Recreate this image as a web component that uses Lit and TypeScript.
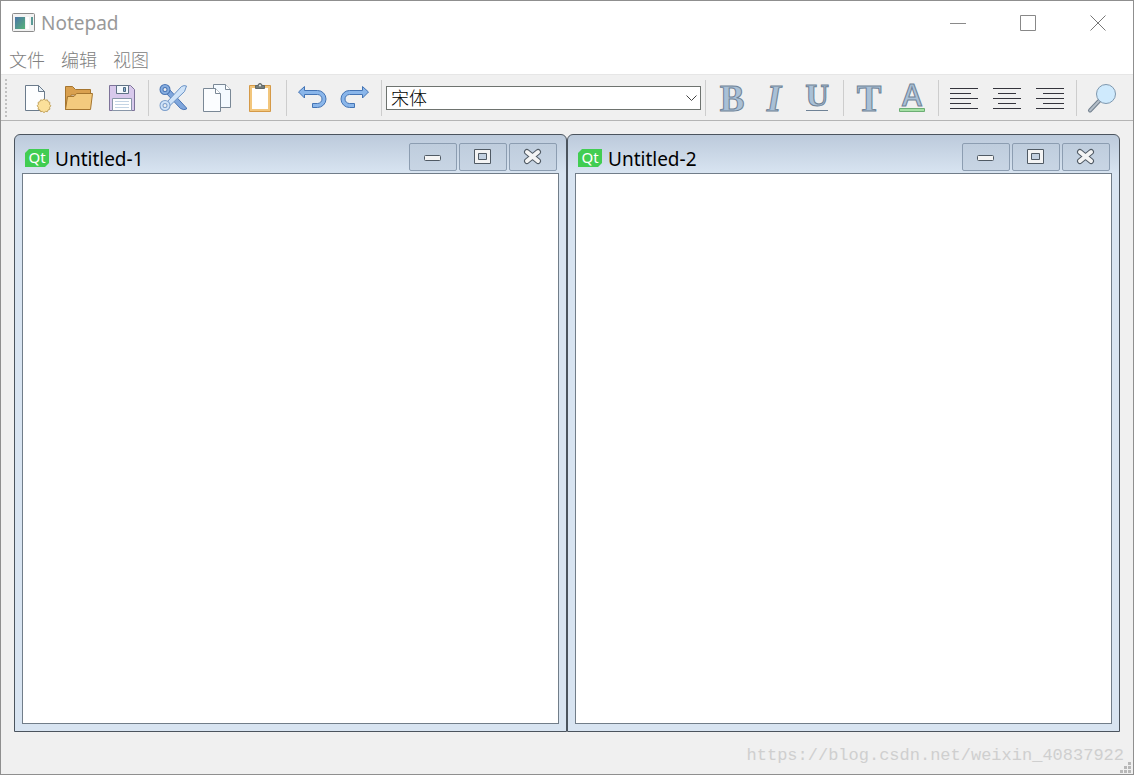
import { LitElement, html, css, svg, SVGTemplateResult } from "lit";
import { customElement, property } from "lit/decorators.js";

const icons: Record<string, SVGTemplateResult> = {
  new: svg`<path d="M5.500 4.500H18.500L24.500 10.500V29.500H5.500Z" fill="#fdfeff" stroke="#6b7b8c"/>
    <path d="M18.500 4.500V10.500H24.500Z" fill="#e8f1f8" stroke="#6b7b8c"/>
    <path d="M24 19l1.500 1.200 1.900-.3.700 1.800 1.800.7-.3 1.900 1.200 1.500-1.200 1.500.3 1.900-1.800.7-.7 1.800-1.900-.3-1.500 1.200-1.500-1.200-1.900.3-.7-1.800-1.800-.7.3-1.900-1.200-1.500 1.200-1.500-.3-1.900 1.800-.7.7-1.800 1.900.3z" transform="translate(0 -1)" fill="#fbe09a" stroke="#c2a25c"/>`,
  open: svg`<path d="M2.500 28.500V5.500H9.500L12.500 8.500H27.500V14H8L5 28.500Z" fill="#d9a04f" stroke="#a5752f"/>
    <path d="M2.500 28.500L4.500 15.500H11L13.500 12.500H29.500L27.500 28.500Z" fill="#f3ca7e" stroke="#a5752f"/>`,
  save: svg`<path d="M3.500 4.500H24.500L28.500 8.500V29.500H3.500Z" fill="#d8c9ec" stroke="#7d7399"/>
    <path d="M10.500 4.500H22.500V12.500H10.500Z" fill="#f4f9fd" stroke="#5f7285"/>
    <path d="M17.500 6.500H19.500V10.500H17.500Z" fill="#8bb2d6" stroke="#4e6880"/>
    <path d="M6.500 17.500H25.500V29.500H6.500Z" fill="#fff" stroke="#8896a8"/>
    <path d="M9 20.500H23M9 23.500H23M9 26.500H23" stroke="#c4d4e4"/>`,
  cut: svg`<path d="M8 12L22.500 27.500Q26 29.500 28.500 28L28.500 27L11.500 8.500Z" fill="#7fa6dc" stroke="#4a75b4"/>
    <path d="M8.500 21.500L23.500 5.500Q26 4 28.500 5L26.500 10.500L12 24.500Z" fill="#cfe3f8" stroke="#6b93c6"/>
    <circle cx="7" cy="8.500" r="3.500" fill="none" stroke="#4a75b4" stroke-width="4"/>
    <circle cx="7" cy="8.500" r="3.500" fill="none" stroke="#86addf" stroke-width="2"/>
    <circle cx="7" cy="24.500" r="3.500" fill="none" stroke="#7b9ecb" stroke-width="4"/>
    <circle cx="7" cy="24.500" r="3.500" fill="none" stroke="#cfe3f8" stroke-width="2"/>`,
  copy: svg`<path d="M12.500 3.500H24.500L29.500 8.500V26.500H12.500Z" fill="#f4faff" stroke="#7a8896"/>
    <path d="M24.500 3.500V8.500H29.500" fill="#fff" stroke="#7a8896"/>
    <path d="M2.500 7.500H14.500L19.500 12.500V30.500H2.500Z" fill="#fbfdff" stroke="#7a8896"/>
    <path d="M14.500 7.500V12.500H19.500" fill="#fff" stroke="#7a8896"/>`,
  paste: svg`<path d="M5.500 4.500H26.500V30.500H5.500Z" fill="#f2c67c" stroke="#d59a48"/>
    <path d="M8 7H24V28H8Z" fill="#fff"/>
    <path d="M11.500 7.500V4.500H14Q14 2.500 16 2.500T18 4.500H20.500V7.500Z" fill="#737c7c" stroke="#5f6868"/>
    <circle cx="16" cy="4.500" r="1" fill="#e8eded"/>`,
  undo: svg`<path d="M2.500 11L8.500 5.500V9.500H21.500A8.500 8.500 0 0 1 21.500 26.500H16.500V22.500H21.500A4.500 4.500 0 0 0 21.500 13.500H8.500V17Z" fill="#8ab6ea" stroke="#4474b4"/>`,
  redo: svg`<path d="M29.500 11L23.500 5.500V9.500H10.500A8.500 8.500 0 0 0 10.500 26.500H15.500V22.500H10.500A4.500 4.500 0 0 1 10.500 13.500H23.500V17Z" fill="#8ab6ea" stroke="#4474b4"/>`,
  bold: svg`<text class="serif" x="17" y="30" font-size="37">B</text>`,
  italic: svg`<text class="serif italic" x="16" y="30" font-size="37">I</text>`,
  underline: svg`<text class="slab" x="16" y="25" font-size="27">U</text><path d="M5 29.500H27" stroke="#6f8296"/>`,
  font: svg`<text class="serif" x="16" y="30" font-size="37">T</text>`,
  color: svg`<text class="sans" x="16" y="25" font-size="30">A</text><path d="M3.500 27.500H28.500V30.500H3.500Z" fill="#a4e0a4" stroke="#6cae74"/>`,
  left: svg`<path d="M2 7.500H30M2 12.500H23M2 17.500H30M2 22.500H23M2 27.500H30" stroke="#34343c"/>`,
  center: svg`<path d="M2 7.500H30M7 12.500H25M2 17.500H30M7 22.500H25M2 27.500H30" stroke="#34343c"/>`,
  right: svg`<path d="M2 7.500H30M9 12.500H30M2 17.500H30M9 22.500H30M2 27.500H30" stroke="#34343c"/>`,
  search: svg`<path d="M4 29.500L13 20" stroke="#717f8d" stroke-width="4" stroke-linecap="round"/>
    <path d="M4 29.500L13 20" stroke="#b4bec8" stroke-width="2" stroke-linecap="round"/>
    <circle cx="20" cy="13" r="9.500" fill="#cfeafd" stroke="#7e97ae"/>`,
};

interface Tool {
  icon: string;
  label: string;
}

const fileTools: Tool[][] = [
  [
    { icon: "new", label: "新建" },
    { icon: "open", label: "打开" },
    { icon: "save", label: "保存" },
  ],
  [
    { icon: "cut", label: "剪切" },
    { icon: "copy", label: "复制" },
    { icon: "paste", label: "粘贴" },
  ],
  [
    { icon: "undo", label: "撤销" },
    { icon: "redo", label: "重做" },
  ],
];

const formatTools: Tool[][] = [
  [
    { icon: "bold", label: "粗体" },
    { icon: "italic", label: "斜体" },
    { icon: "underline", label: "下划线" },
  ],
  [
    { icon: "font", label: "字体" },
    { icon: "color", label: "颜色" },
  ],
  [
    { icon: "left", label: "左对齐" },
    { icon: "center", label: "居中" },
    { icon: "right", label: "右对齐" },
  ],
  [{ icon: "search", label: "查找" }],
];

@customElement("tool-button")
class ToolButton extends LitElement {
  @property() icon = "";
  @property() label = "";

  static styles = css`
    :host {
      display: block;
      flex: none;
    }
    .button {
      display: flex;
      justify-content: center;
      align-items: center;
      width: 43px;
      height: 42px;
      padding: 0;
      border: 0;
      background: none;
    }
    .button:hover {
      background: #dcebf8;
    }
    .glyph {
      overflow: visible;
    }
    text {
      text-anchor: middle;
      fill: #a9c0d6;
      stroke: #6f8296;
      stroke-width: 1px;
      font-weight: 700;
    }
    .serif {
      font-family: "Liberation Serif", serif;
    }
    .italic {
      font-style: italic;
    }
    .slab {
      font-family: "DejaVu Serif", serif;
    }
    .sans {
      font-family: "Open Sans", sans-serif;
      font-weight: 600;
    }
  `;

  render() {
    return html`<button class="button" aria-label=${this.label}>
      <svg class="glyph" width="33" height="34" viewBox="0 0 33 34" fill="none">${icons[this.icon]}</svg>
    </button>`;
  }
}

@customElement("sub-window")
class SubWindow extends LitElement {
  @property() name = "";

  static styles = css`
    :host {
      display: flex;
      flex-direction: column;
      min-width: 0;
      box-sizing: border-box;
      padding: 0 7px 7px;
      border: 1px solid #4b545e;
      border-radius: 6px 6px 0 0;
      background: linear-gradient(#bccadb, #d8e4f1 38px, #d8e4f1);
    }
    .title {
      display: flex;
      align-items: center;
      gap: 2px;
      height: 38px;
      padding: 5px 2px 0 3px;
      box-sizing: border-box;
    }
    .logo {
      flex: none;
      margin: 3px 4px 0 0;
      overflow: visible;
    }
    .logo text {
      font: 400 15px "Noto Sans", sans-serif;
      fill: #fff;
      text-anchor: middle;
    }
    .name {
      flex: 1;
      margin: 4px 0 0;
      font: 400 19px/24px "Noto Sans", sans-serif;
      color: #000;
      white-space: nowrap;
      overflow: hidden;
    }
    .control {
      display: flex;
      flex: none;
      justify-content: center;
      align-items: center;
      width: 48px;
      height: 28px;
      padding: 0;
      border: 1px solid #8c9db1;
      border-radius: 2px;
      background: linear-gradient(#bfcddd, #c8d5e4);
    }
    .page {
      flex: 1;
      box-sizing: border-box;
      width: 100%;
      padding: 4px;
      border: 1px solid #717d89;
      outline: 0;
      resize: none;
      background: #fff;
      font: 18px "Noto Sans CJK SC", sans-serif;
    }
  `;

  render() {
    return html`
      <div class="title">
        <svg class="logo" width="24" height="18" viewBox="0 0 24 18">
          <path d="M4 0H24V14L20 18H0V4Z" fill="#41cd52" />
          <text x="12" y="14">Qt</text>
        </svg>
        <h2 class="name">${this.name}</h2>
        <button class="control" aria-label="最小化">
          <svg width="20" height="20" fill="#f4f4f4" stroke="#505a64">
            <rect x="1.500" y="8.500" width="16" height="5" rx="1" />
          </svg>
        </button>
        <button class="control" aria-label="最大化">
          <svg width="20" height="20" stroke="#505a64">
            <path fill="#f4f4f4" fill-rule="evenodd" d="M1.500 2.500H17.500V16.500H1.500ZM5.500 6.500H13.500V12.500H5.500Z" />
          </svg>
        </button>
        <button class="control" aria-label="关闭">
          <svg width="20" height="20" stroke-linecap="round">
            <path d="M4 5L15 14M15 5L4 14" stroke="#505a64" stroke-width="6" />
            <path d="M4 5L15 14M15 5L4 14" stroke="#f4f4f4" stroke-width="4" />
          </svg>
        </button>
      </div>
      <textarea class="page" aria-label=${this.name}></textarea>
    `;
  }
}

@customElement("app-root")
class AppRoot extends LitElement {
  static styles = css`
    :host {
      display: flex;
      flex-direction: column;
      box-sizing: border-box;
      height: 100vh;
      border: 1px solid #8f8f8f;
      background: #f0f0f0;
      font-family: "Noto Sans", "Noto Sans CJK SC", sans-serif;
    }
    .titlebar {
      display: flex;
      align-items: center;
      flex: none;
      height: 43px;
      padding-left: 11px;
      background: #fff;
    }
    .appname {
      flex: 1;
      margin: 0 0 0 5px;
      font: 400 19px/26px "Noto Sans", sans-serif;
      color: #999;
    }
    .winbutton {
      display: flex;
      justify-content: center;
      align-items: center;
      width: 70px;
      height: 43px;
      padding: 0;
      border: 0;
      background: none;
    }
    .menubar {
      display: flex;
      flex: none;
      gap: 16px;
      height: 30px;
      padding: 0 8px;
      background: #fff;
      border-bottom: 1px solid #e6e6e6;
    }
    .menu {
      padding: 0;
      border: 0;
      background: none;
      font: 300 18px/30px "Noto Sans CJK SC", sans-serif;
      color: #808080;
    }
    .toolbar {
      display: flex;
      flex: none;
      align-items: center;
      height: 45px;
      padding-right: 9px;
      border-bottom: 1px solid #b4b4b4;
    }
    .grip {
      flex: none;
      width: 2px;
      height: 38px;
      margin: 0 8px 0 4px;
      background: repeating-linear-gradient(#c0c0c0 0 2px, transparent 2px 4px);
    }
    .divider {
      flex: none;
      width: 1px;
      height: 36px;
      margin: 0 4px;
      background: #cdcdcd;
    }
    .fontbox {
      display: grid;
      flex: 1;
      min-width: 80px;
      align-items: center;
    }
    .select,
    .chevron {
      grid-area: 1 / 1;
    }
    .select {
      appearance: none;
      width: 100%;
      height: 24px;
      padding: 0 24px 2px 4px;
      border: 1px solid #6e736f;
      border-radius: 0;
      background: #fff;
      font: 300 18px/20px "Noto Sans CJK SC", sans-serif;
      color: #000;
    }
    .chevron {
      justify-self: end;
      margin-right: 4px;
      pointer-events: none;
    }
    .workspace {
      display: grid;
      flex: 1;
      grid-template-columns: 1fr 1fr;
      min-height: 0;
      padding: 13px 13px 0;
    }
    .status {
      display: flex;
      flex: none;
      justify-content: flex-end;
      align-items: center;
      height: 42px;
    }
    .watermark {
      padding-top: 6px;
      font: 17px/24px "Liberation Mono", monospace;
      color: #cfcfcf;
      text-decoration: none;
    }
    .resize {
      align-self: flex-end;
      margin: 0 2px 1px -4px;
    }
  `;

  private tools(group: Tool[]) {
    return group.map((t) => html`<tool-button icon=${t.icon} label=${t.label}></tool-button>`);
  }

  render() {
    return html`
      <header class="titlebar">
        <svg width="24" height="20" viewBox="0 0 24 20">
          <defs>
            <linearGradient id="screen" x2="1" y2="1">
              <stop stop-color="#4b74a8" />
              <stop offset="1" stop-color="#56b377" />
            </linearGradient>
          </defs>
          <rect x=".5" y=".5" width="22" height="18" rx="1" fill="#f2f2f2" stroke="#8b8b8b" />
          <rect x="3" y="4" width="10" height="12" fill="url(#screen)" />
          <path d="M14 4H17V16H14Z" fill="#fff" />
          <path d="M19 4H21V12H19Z" fill="#5a9a96" />
        </svg>
        <h1 class="appname">Notepad</h1>
        <button class="winbutton" aria-label="最小化">
          <svg width="16" height="16"><path d="M0 8.500H16" stroke="#8a8a8a" /></svg>
        </button>
        <button class="winbutton" aria-label="最大化">
          <svg width="16" height="16" fill="none"><path d="M.5 .5H15.500V15.500H.5Z" stroke="#888" /></svg>
        </button>
        <button class="winbutton" aria-label="关闭">
          <svg width="16" height="16"><path d="M.5 .5L15.500 15.500M15.500 .5L.5 15.500" stroke="#777" /></svg>
        </button>
      </header>
      <nav class="menubar">
        ${["文件", "编辑", "视图"].map((m) => html`<button class="menu">${m}</button>`)}
      </nav>
      <div class="toolbar" role="toolbar">
        <span class="grip"></span>
        ${fileTools.map((g) => html`${this.tools(g)}<span class="divider"></span>`)}
        <div class="fontbox">
          <select class="select" aria-label="字体">
            <option>宋体</option>
          </select>
          <svg class="chevron" width="11" height="8" fill="none"><path d="M.5 1.500L5.500 6.500L10.500 1.500" stroke="#444" /></svg>
        </div>
        ${formatTools.map((g) => html`<span class="divider"></span>${this.tools(g)}`)}
      </div>
      <main class="workspace">
        <sub-window name="Untitled-1"></sub-window>
        <sub-window name="Untitled-2"></sub-window>
      </main>
      <footer class="status">
        <a class="watermark" href="https://blog.csdn.net/weixin_40837922">https://blog.csdn.net/weixin_40837922</a>
        <svg class="resize" width="11" height="11" fill="#b8b8b8">
          <path d="M8 0h3v3h-3zM4 4h3v3h-3zM8 4h3v3h-3zM0 8h3v3h-3zM4 8h3v3h-3zM8 8h3v3h-3z" />
        </svg>
      </footer>
    `;
  }
}
